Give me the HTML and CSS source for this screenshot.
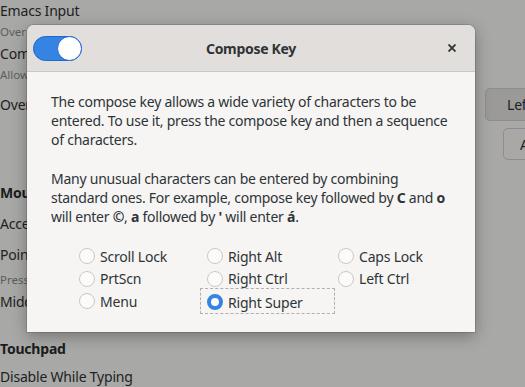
FILE: index.html
```html
<!DOCTYPE html>
<html>
<head>
<meta charset="utf-8">
<link rel="stylesheet" href="styles.css">
</head>
<body>
<div class="page">
  <div class="row r1"><span class="t">Emacs Input</span></div>
  <div class="row r2"><span class="s">Overrides shortcuts to use keybindings from the Emacs editor</span></div>
  <div class="row r3"><span class="t">Compose Key</span></div>
  <div class="row r4"><span class="s">Allows typing of unusual characters</span></div>
  <div class="row r5">
    <span class="t">Overview Shortcut</span>
    <span class="bg-btn pressed">Left Super</span>
  </div>
  <div class="row r6">
    <span class="t"></span>
    <span class="bg-btn outline">Alternative</span>
  </div>
  <div class="row r7"><span class="h">Mouse</span></div>
  <div class="row r8"><span class="t">Acceleration Profile</span></div>
  <div class="row r9"><span class="t">Pointer Speed</span></div>
  <div class="row r10"><span class="s">Press</span></div>
  <div class="row r11"><span class="t">Middle Click Paste</span></div>
  <div class="row r12"><span class="h">Touchpad</span></div>
  <div class="row r13"><span class="t">Disable While Typing</span></div>
</div>

<div class="dialog">
  <div class="header">
    <span class="switch"><span class="knob"></span></span>
    <span class="dtitle">Compose Key</span>
    <span class="close">
      <svg width="8" height="8" viewBox="0 0 8 8"><path d="M0.5 0.5 L7.5 7.5 M7.5 0.5 L0.5 7.5" stroke="#2e3436" stroke-width="1.8" stroke-linecap="butt"/></svg>
    </span>
  </div>
  <div class="content">
    <p>The compose key allows a wide variety of characters to be<br>entered. To use it, press the compose key and then a sequence<br>of characters.</p>
    <p>Many unusual characters can be entered by combining<br>standard ones. For example, compose key followed by <b>C</b> and <b>o</b><br>will enter <b>©</b>, <b>a</b> followed by <b>'</b> will enter <b>á</b>.</p>
    <div class="radios">
      <label class="radio"><span class="dot"></span>Scroll Lock</label>
      <label class="radio"><span class="dot"></span>Right Alt</label>
      <label class="radio"><span class="dot"></span>Caps Lock</label>
      <label class="radio"><span class="dot"></span>PrtScn</label>
      <label class="radio"><span class="dot"></span>Right Ctrl</label>
      <label class="radio"><span class="dot"></span>Left Ctrl</label>
      <label class="radio"><span class="dot"></span>Menu</label>
      <label class="radio focus"><span class="dot on"></span>Right Super</label>
    </div>
  </div>
</div>
</body>
</html>
```
FILE: styles.css
```css
html, body {
  margin: 0;
  padding: 0;
}
body {
  width: 525px;
  height: 387px;
  overflow: hidden;
  background: #a8a8a7;
  font-family: "Noto Sans", "DejaVu Sans", sans-serif;
  color: #1f2122;
  position: relative;
}
.page {
  display: flex;
  flex-direction: column;
  white-space: nowrap;
  width: 525px;
  overflow: hidden;
}
.row {
  display: flex;
  align-items: center;
  justify-content: space-between;
  font-size: 14px;
  letter-spacing: -0.2px;
}
.t { color: #1f2122; }
.s { color: #5d5e5e; font-size: 11.5px; letter-spacing: 0; }
.h { font-weight: bold; color: #1a1c1d; }
.r1 { height: 20px; }
.r2 { height: 22px; }
.r3 { height: 22px; }
.r4 { height: 20px; }
.r5 { height: 40px; }
.r6 { height: 36px; align-items: flex-end; }
.r7 { height: 32px; margin-top: 16px; }
.r8 { height: 30px; }
.r9 { height: 32px; }
.r10 { height: 18px; }
.r11 { height: 26px; }
.r12 { height: 28px; margin-top: 20px; }
.r13 { height: 28px; }
.bg-btn {
  display: inline-flex;
  align-items: center;
  height: 33px;
  border-radius: 5px;
  box-sizing: border-box;
  flex: none;
}
.bg-btn.pressed {
  background: #9b9a98;
  border: 1px solid #8f8d8b;
  width: 90px;
  padding-left: 21px;
  margin-right: -50px;
}
.bg-btn.outline {
  border: 1px solid #8e8c8a;
  background: #a9a8a7;
  width: 80px;
  height: 32px;
  padding-left: 16px;
  margin-right: -58px;
}

.dialog {
  position: absolute;
  left: 27px;
  top: 25px;
  width: 448px;
  height: 307px;
  background: #f6f5f4;
  border-radius: 7px 7px 0 0;
  box-shadow: 0 4px 16px rgba(0,0,0,0.32), 0 0 0 1px rgba(0,0,0,0.12);
  color: #2e3436;
  overflow: hidden;
}
.header {
  height: 46px;
  background: #e1dedb;
  border-bottom: 1px solid #cdc7c2;
  display: flex;
  align-items: center;
  padding: 0 6px;
  position: relative;
}
.switch {
  width: 49px;
  height: 25px;
  box-sizing: border-box;
  border-radius: 13px;
  background: #3584e4;
  border: 1px solid #1b6acb;
  position: relative;
  flex: none;
}
.knob {
  position: absolute;
  right: -1px;
  top: -1px;
  width: 25px;
  height: 25px;
  box-sizing: border-box;
  border-radius: 50%;
  background: #ffffff;
  border: 1px solid #1b6acb;
}
.dtitle {
  position: absolute;
  left: 0;
  right: 0;
  text-align: center;
  font-weight: bold;
  font-size: 14px;
  letter-spacing: -0.3px;
  pointer-events: none;
}
.close {
  margin-left: auto;
  margin-right: 13px;
  display: flex;
  align-items: center;
}
.content {
  padding: 20px 10px 0 24px;
  font-size: 14px;
  letter-spacing: -0.25px;
  line-height: 19px;
  white-space: nowrap;
}
.content p {
  margin: 0 0 20px 0;
}
.radios {
  display: grid;
  grid-template-columns: 128px 131px 110px;
  grid-auto-rows: 22.5px;
  margin-left: 28px;
  margin-top: -1px;
  letter-spacing: -0.2px;
}
.radio {
  display: flex;
  align-items: center;
  gap: 5px;
  height: 22.5px;
  box-sizing: border-box;
}
.radio.focus {
  outline: 1px dashed #b1b0ae;
  outline-offset: 1px;
  margin-left: -5px;
  padding-left: 5px;
  padding-top: 2px;
  width: 131px;
  height: 22px;
}
.dot {
  width: 16px;
  height: 16px;
  box-sizing: border-box;
  border: 1px solid #cdc7c2;
  border-radius: 50%;
  background: #fbfbfa;
  flex: none;
}
.dot.on {
  border: 4.5px solid #3584e4;
  background: #ffffff;
}
```
